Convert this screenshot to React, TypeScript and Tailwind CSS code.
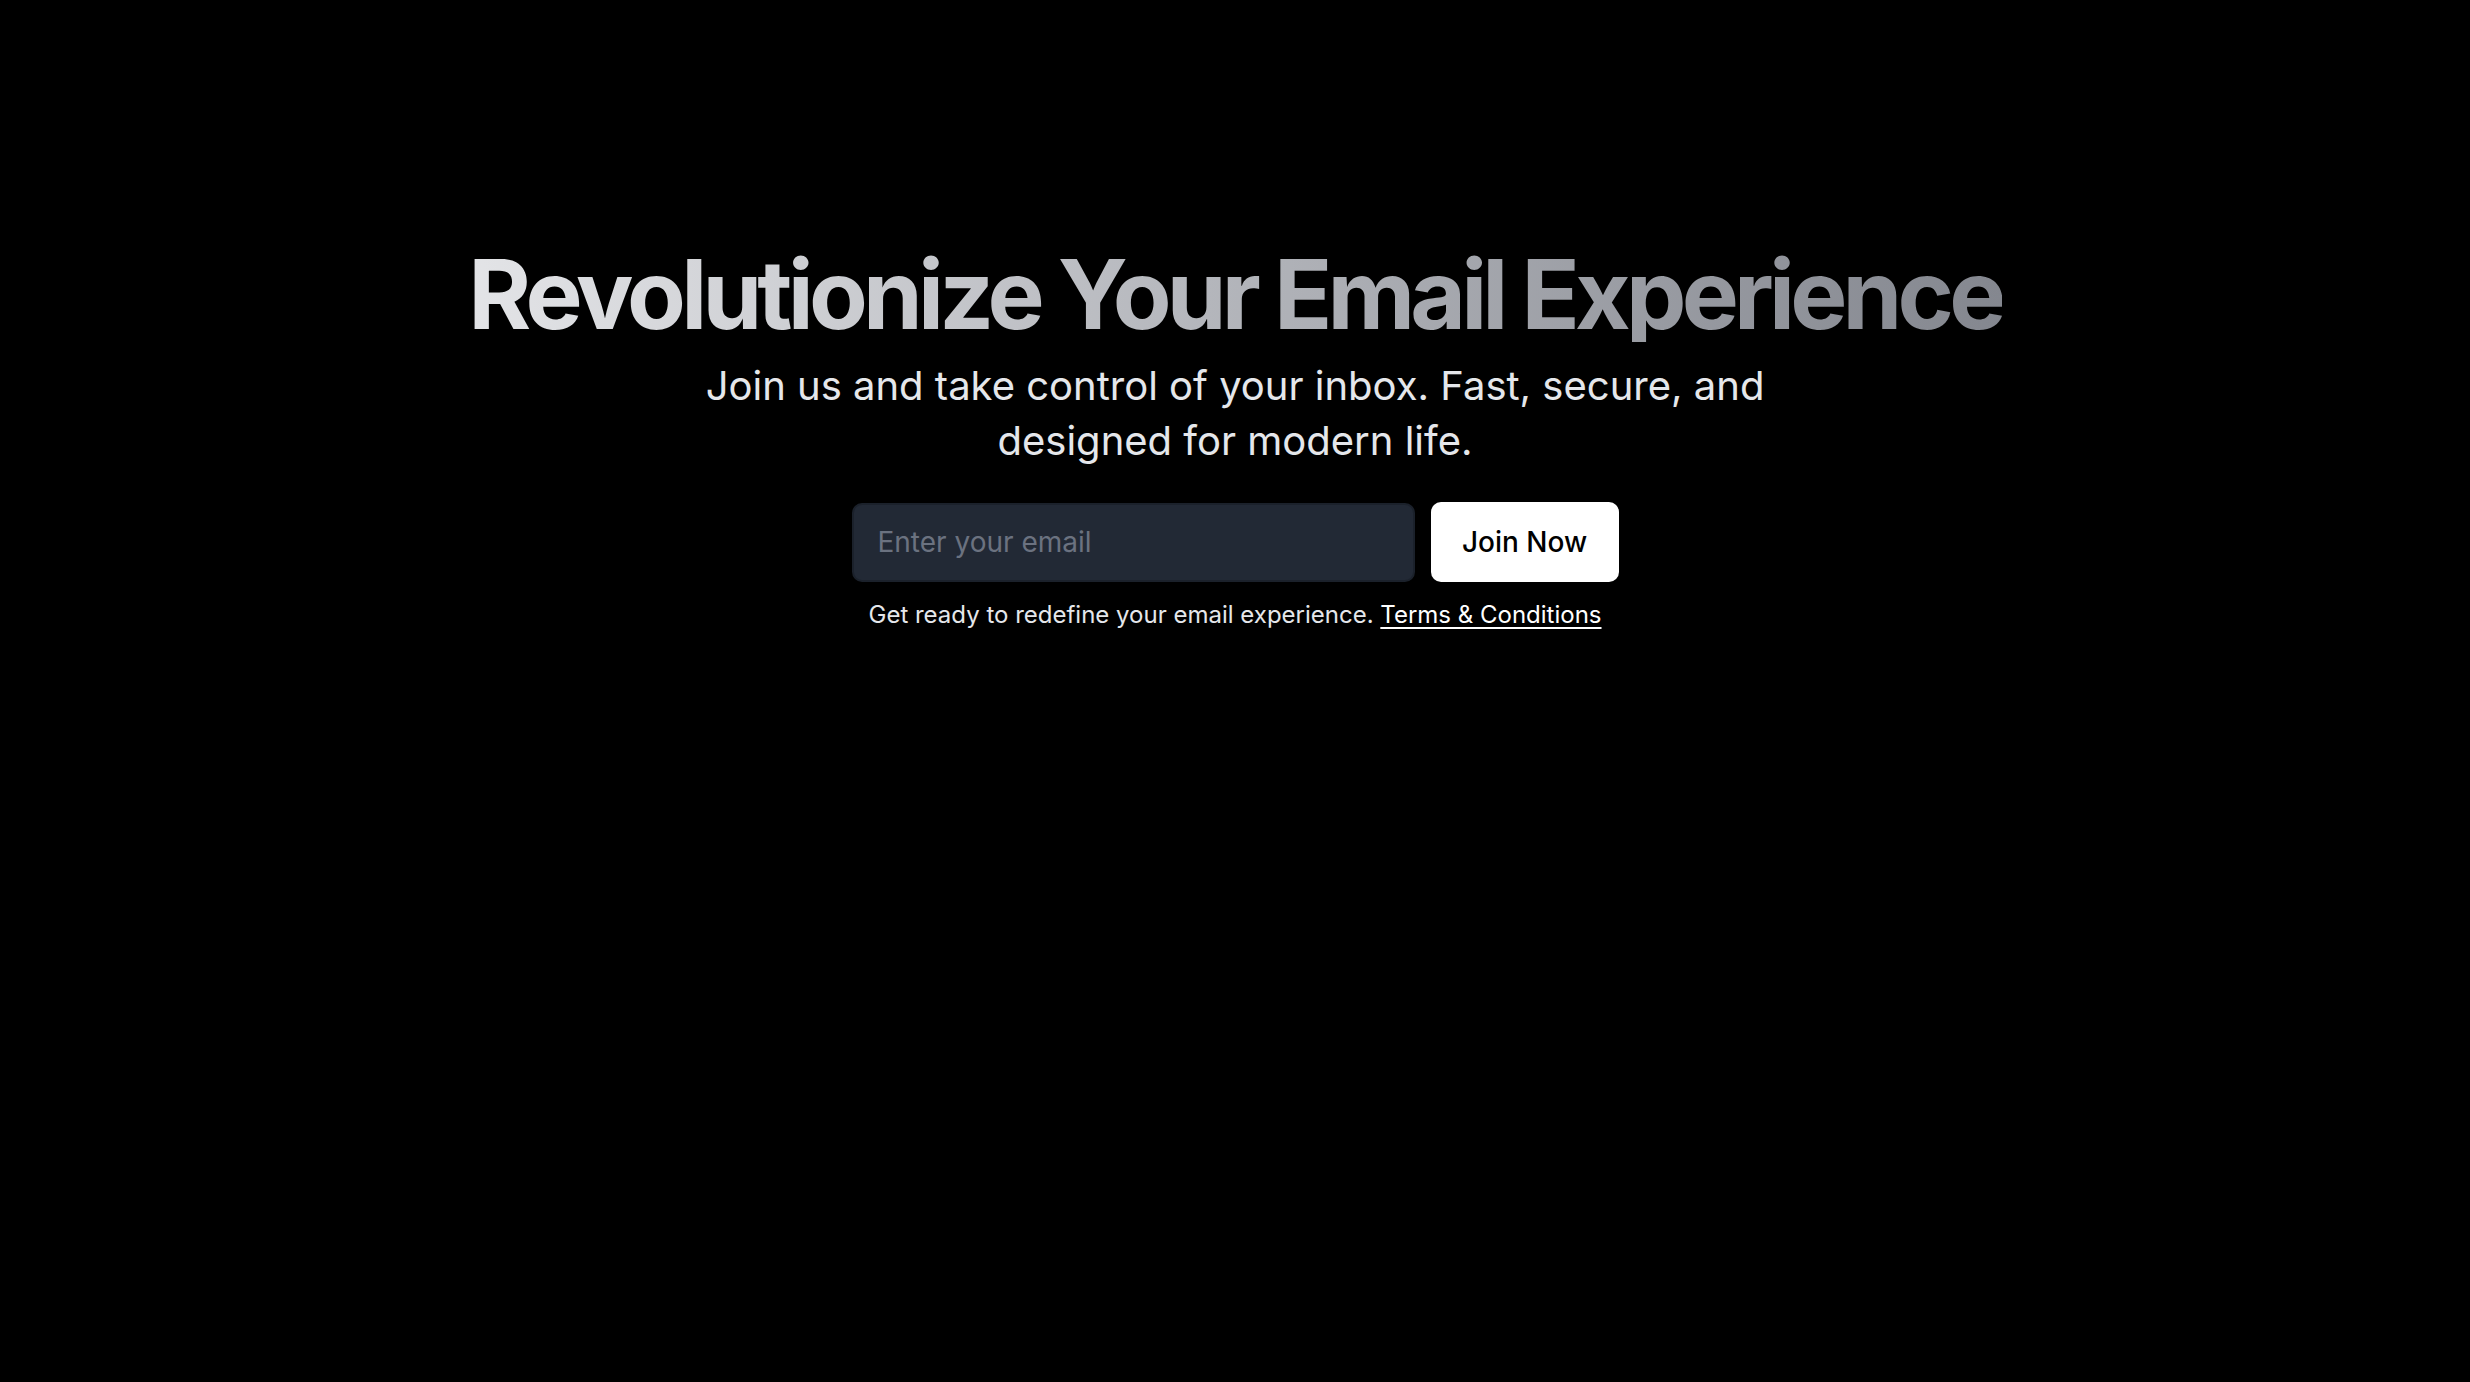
export default function App() {
  return (
    <div className="min-h-screen w-full bg-black font-['Inter',sans-serif]">
      <section className="flex flex-col items-center pt-[246px] text-center">
        <h1 className="inline-block bg-gradient-to-r from-[#e3e4e7] to-[#84878f] bg-clip-text text-[96px] leading-[96px] font-bold tracking-[-0.05em] text-transparent">
          Revolutionize Your Email Experience
        </h1>
        <p className="mt-4 max-w-[1100px] text-[40px] leading-[55px] text-[#e5e7eb]">
          Join us and take control of your inbox. Fast, secure, and designed for modern life.
        </p>
        <form className="mt-[34px] flex items-center gap-4" onSubmit={(e) => e.preventDefault()}>
          <input
            type="email"
            placeholder="Enter your email"
            className="h-[79px] w-[563px] rounded-[10px] border-2 border-[#1b212b] bg-[#222935] px-6 text-[28px] text-white outline-none placeholder:text-[#6b7280]"
          />
          <button
            type="submit"
            className="h-[80px] w-[188px] rounded-[10px] bg-white text-[28px] font-medium text-black"
          >
            Join Now
          </button>
        </form>
        <p className="mt-[17px] text-[24px] leading-[32px] text-[#e5e7eb]">
          Get ready to redefine your email experience.{" "}
          <a href="#" className="text-white underline underline-offset-4">
            Terms &amp; Conditions
          </a>
        </p>
      </section>
    </div>
  );
}
